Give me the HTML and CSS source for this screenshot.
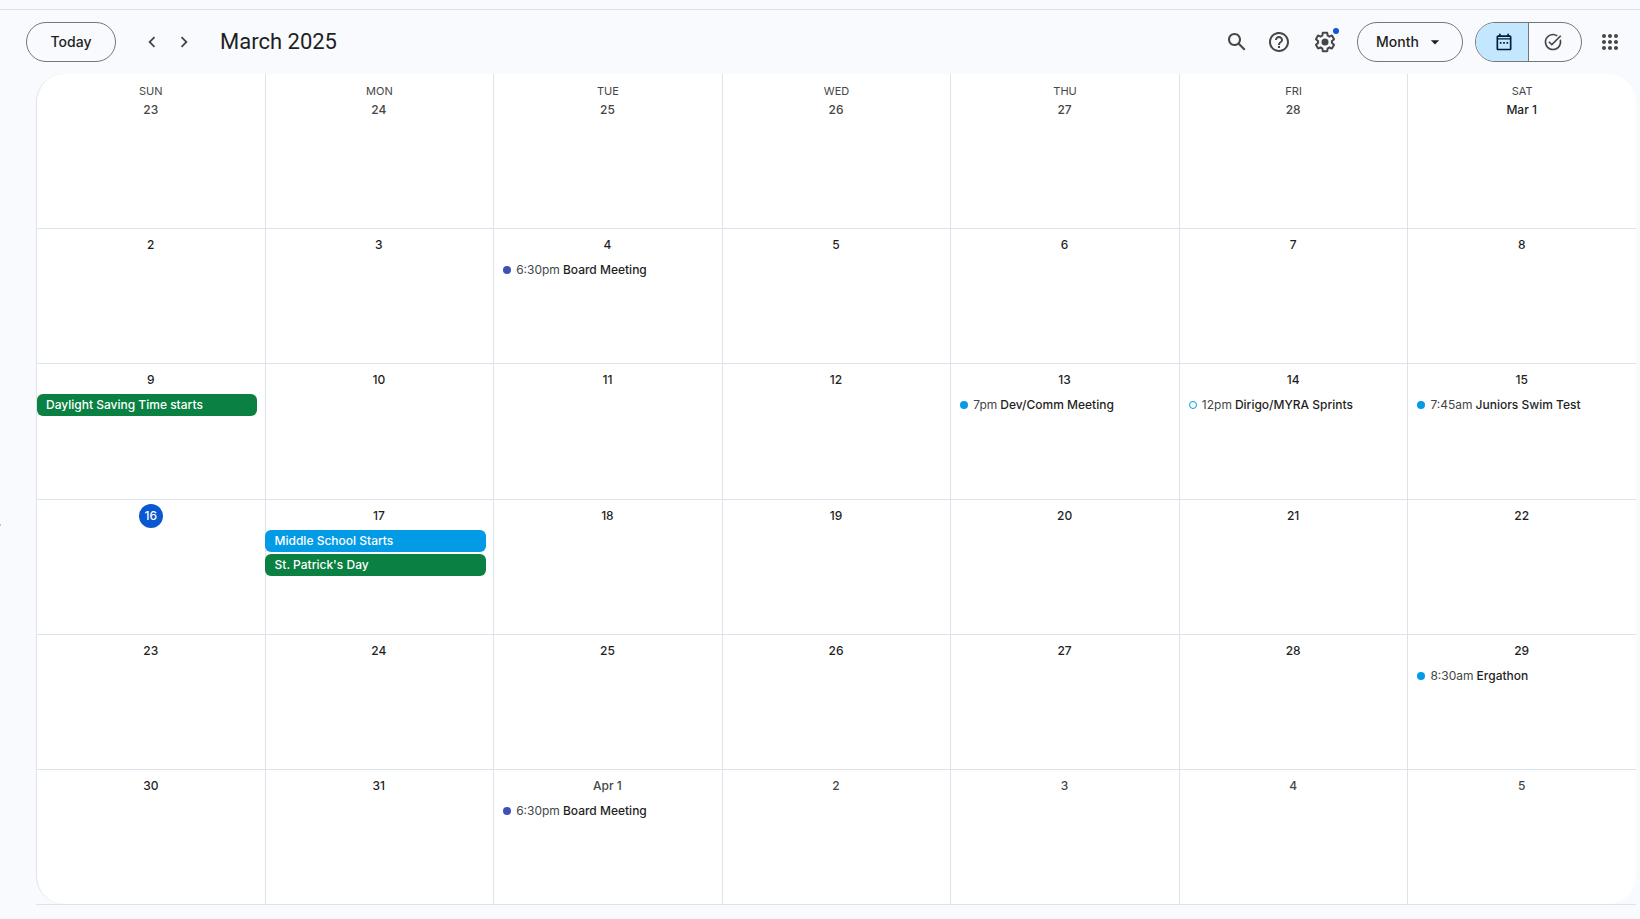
FILE: index.html
```html
<!DOCTYPE html>
<html lang="en">
<head>
<meta charset="utf-8">
<title>March 2025</title>
<link rel="stylesheet" href="styles.css">
</head>
<body>
<header class="toolbar">
  <button class="pill today-button" type="button">Today</button>
  <nav class="pager" aria-label="Change month">
    <button class="icon-button" type="button" aria-label="Previous month"><svg viewBox="0 0 24 24" width="22" height="22"><path d="M15.41 7.41 14 6l-6 6 6 6 1.41-1.41L10.83 12z"/></svg></button>
    <button class="icon-button" type="button" aria-label="Next month"><svg viewBox="0 0 24 24" width="22" height="22"><path d="M10 6 8.59 7.41 13.17 12l-4.58 4.59L10 18l6-6z"/></svg></button>
  </nav>
  <h1 class="title">March 2025</h1>
  <div class="tools">
    <button class="icon-button" type="button" aria-label="Search"><svg viewBox="0 0 24 24" width="24" height="24"><path d="M20.49 19l-5.73-5.73C15.53 12.2 16 10.91 16 9.5 16 5.91 13.09 3 9.5 3S3 5.91 3 9.5 5.91 16 9.5 16c1.41 0 2.7-.47 3.77-1.24L19 20.49 20.49 19zM5 9.5C5 7.01 7.01 5 9.5 5S14 7.01 14 9.5 11.99 14 9.5 14 5 11.99 5 9.5z"/></svg></button>
    <button class="icon-button help" type="button" aria-label="Support"><svg viewBox="0 0 24 24" width="24" height="24"><path d="M11 18h2v-2h-2v2zm1-16C6.48 2 2 6.48 2 12s4.48 10 10 10 10-4.480 10-10S17.52 2 12 2zm0 18c-4.41 0-8-3.590-8-8s3.590-8 8-8 8 3.590 8 8-3.590 8-8 8zm0-14c-2.210 0-4 1.790-4 4h2c0-1.100.9-2 2-2s2 .9 2 2c0 2-3 1.750-3 5h2c0-2.250 3-2.500 3-5 0-2.210-1.790-4-4-4z"/></svg></button>
    <button class="icon-button settings" type="button" aria-label="Settings"><svg viewBox="0 0 24 24" width="24" height="24"><path d="M13.850 22.250h-3.700c-.740 0-1.360-.540-1.450-1.270l-.270-1.890c-.270-.140-.530-.290-.790-.460l-1.800.720c-.7.260-1.470-.030-1.810-.650L2.200 15.530c-.350-.660-.2-1.440.360-1.880l1.530-1.190c-.010-.150-.020-.3-.020-.460 0-.150.010-.310.020-.460l-1.520-1.190c-.590-.450-.740-1.260-.370-1.880l1.850-3.190c.340-.620 1.110-.9 1.790-.630l1.810.730c.260-.170.520-.320.780-.460l.270-1.910c.090-.7.710-1.250 1.440-1.250h3.700c.740 0 1.360.540 1.450 1.270l.270 1.890c.270.140.530.290.790.460l1.800-.720c.710-.260 1.480.030 1.820.650l1.840 3.180c.360.660.2 1.440-.360 1.880l-1.520 1.190c.010.150.020.300.020.460s-.010.310-.020.460l1.520 1.190c.560.450.720 1.230.370 1.860l-1.860 3.220c-.340.620-1.110.9-1.800.630l-1.800-.720c-.260.170-.520.320-.780.460l-.270 1.910c-.1.680-.720 1.220-1.460 1.220zm-3.230-2h2.760l.370-2.550.530-.220c.440-.180.880-.440 1.340-.780l.450-.340 2.380.960 1.380-2.400-2.030-1.580.070-.560c.030-.260.060-.510.060-.780s-.030-.530-.060-.780l-.070-.560 2.030-1.580-1.390-2.400-2.390.960-.450-.350c-.420-.320-.870-.580-1.330-.770l-.520-.220-.370-2.550h-2.760l-.370 2.550-.530.210c-.440.190-.880.440-1.340.790l-.450.330-2.380-.950-1.390 2.390 2.030 1.580-.070.560a7 7 0 0 0 0 1.560l.070.560-2.030 1.580 1.380 2.400 2.390-.960.450.350c.430.330.860.580 1.330.770l.530.220z"/><circle cx="12" cy="12" r="3.500"/></svg><span class="notice"></span></button>
    <button class="pill view-button" type="button">Month<svg viewBox="0 0 24 24" width="20" height="20"><path d="M7 10l5 5 5-5z"/></svg></button>
    <div class="switch" role="group" aria-label="Calendar or tasks">
      <button class="half selected" type="button" aria-label="Calendar"><svg viewBox="0 0 24 24" width="20" height="20"><path d="M19 4h-1V2h-2v2H8V2H6v2H5c-1.110 0-2 .9-2 2v14c0 1.100.890 2 2 2h14c1.100 0 2-.9 2-2V6c0-1.100-.9-2-2-2zm0 16H5V9h14v11zM5 7.500V6h14v1.500zM9 14H7v-2h2v2zm4 0h-2v-2h2v2zm4 0h-2v-2h2v2z"/></svg></button>
      <button class="half" type="button" aria-label="Tasks"><svg viewBox="0 0 24 24" width="20" height="20"><path d="M22 5.180 10.590 16.600l-4.240-4.240 1.410-1.410 2.830 2.830 10-10L22 5.180zM12 20c-4.410 0-8-3.590-8-8s3.590-8 8-8c1.570 0 3.040.460 4.280 1.250l1.450-1.450A10.020 10.020 0 0 0 12 2C6.480 2 2 6.480 2 12s4.480 10 10 10 10-4.480 10-10c0-1.190-.220-2.330-.6-3.390L19.740 10.270c.170.550.260 1.130.260 1.730 0 4.410-3.590 8-8 8z"/></svg></button>
    </div>
    <button class="icon-button apps" type="button" aria-label="Apps"><svg viewBox="0 0 24 24" width="24" height="24"><path d="M6 8c1.100 0 2-.9 2-2s-.9-2-2-2-2 .9-2 2 .9 2 2 2zm6 12c1.100 0 2-.9 2-2s-.9-2-2-2-2 .9-2 2 .9 2 2 2zm-6 0c1.100 0 2-.9 2-2s-.9-2-2-2-2 .9-2 2 .9 2 2 2zm0-6c1.100 0 2-.9 2-2s-.9-2-2-2-2 .9-2 2 .9 2 2 2zm6 0c1.100 0 2-.9 2-2s-.9-2-2-2-2 .9-2 2 .9 2 2 2zm4-8c0 1.100.9 2 2 2s2-.9 2-2-.9-2-2-2-2 .9-2 2zm-4 2c1.100 0 2-.9 2-2s-.9-2-2-2-2 .9-2 2 .9 2 2 2zm6 6c1.100 0 2-.9 2-2s-.9-2-2-2-2 .9-2 2 .9 2 2 2zm0 6c1.100 0 2-.9 2-2s-.9-2-2-2-2 .9-2 2 .9 2 2 2z"/></svg></button>
  </div>
</header>
<main class="month">
  <span class="edge-mark"></span>
  <table class="calendar">
    <thead>
      <tr><th scope="col">SUN</th><th scope="col">MON</th><th scope="col">TUE</th><th scope="col">WED</th><th scope="col">THU</th><th scope="col">FRI</th><th scope="col">SAT</th></tr>
    </thead>
    <tbody>
      <tr>
        <td><span class="day other">23</span></td><td><span class="day other">24</span></td><td><span class="day other">25</span></td><td><span class="day other">26</span></td><td><span class="day other">27</span></td><td><span class="day other">28</span></td><td><span class="day">Mar 1</span></td>
      </tr>
      <tr>
        <td><span class="day">2</span></td><td><span class="day">3</span></td>
        <td><span class="day">4</span><div class="event"><span class="dot indigo"></span><span class="time">6:30pm</span><span>Board Meeting</span></div></td>
        <td><span class="day">5</span></td><td><span class="day">6</span></td><td><span class="day">7</span></td><td><span class="day">8</span></td>
      </tr>
      <tr>
        <td><span class="day">9</span><div class="chip green">Daylight Saving Time starts</div></td>
        <td><span class="day">10</span></td><td><span class="day">11</span></td><td><span class="day">12</span></td>
        <td><span class="day">13</span><div class="event"><span class="dot"></span><span class="time">7pm</span><span>Dev/Comm Meeting</span></div></td>
        <td><span class="day">14</span><div class="event"><span class="dot hollow"></span><span class="time">12pm</span><span>Dirigo/MYRA Sprints</span></div></td>
        <td><span class="day">15</span><div class="event"><span class="dot"></span><span class="time">7:45am</span><span>Juniors Swim Test</span></div></td>
      </tr>
      <tr>
        <td><span class="day current">16</span></td>
        <td><span class="day">17</span><div class="chip blue">Middle School Starts</div><div class="chip green">St. Patrick's Day</div></td>
        <td><span class="day">18</span></td><td><span class="day">19</span></td><td><span class="day">20</span></td><td><span class="day">21</span></td><td><span class="day">22</span></td>
      </tr>
      <tr>
        <td><span class="day">23</span></td><td><span class="day">24</span></td><td><span class="day">25</span></td><td><span class="day">26</span></td><td><span class="day">27</span></td><td><span class="day">28</span></td>
        <td><span class="day">29</span><div class="event"><span class="dot"></span><span class="time">8:30am</span><span>Ergathon</span></div></td>
      </tr>
      <tr>
        <td><span class="day">30</span></td><td><span class="day">31</span></td>
        <td><span class="day other">Apr 1</span><div class="event"><span class="dot indigo"></span><span class="time">6:30pm</span><span>Board Meeting</span></div></td>
        <td><span class="day other">2</span></td><td><span class="day other">3</span></td><td><span class="day other">4</span></td><td><span class="day other">5</span></td>
      </tr>
    </tbody>
  </table>
</main>
</body>
</html>
```
FILE: styles.css
```css
* { box-sizing: border-box; }

body {
  margin: 0;
  padding: 9px 0 14px;
  min-height: 100vh;
  display: flex;
  flex-direction: column;
  background: #f8fafd;
  color: #1f1f1f;
  font-family: Inter, Roboto, sans-serif;
  font-size: 12px;
}

button {
  font: inherit;
  color: inherit;
  background: none;
  border: 0;
  padding: 0;
  cursor: pointer;
}

svg { display: block; fill: currentColor; }

/* Toolbar */
.toolbar {
  display: flex;
  align-items: center;
  height: 65px;
  padding: 0 14px 0 26px;
  border-top: 1px solid #dde3ea;
}

.pill {
  height: 40px;
  padding-bottom: 1px;
  border: 1px solid #747775;
  border-radius: 20px;
  font-size: 14px;
  font-weight: 500;
}

.today-button { width: 90px; }

.pager { display: flex; margin-left: 20px; }

.icon-button {
  position: relative;
  display: grid;
  place-items: center;
  width: 32px;
  height: 40px;
  color: #444746;
}

.title {
  margin: 0 0 0 20px;
  font-family: Roboto, sans-serif;
  font-size: 22px;
  line-height: 28px;
  font-weight: 400;
}

.tools { display: flex; align-items: center; margin-left: auto; }

.help { margin-left: 10px; }
.settings { margin-left: 14px; }
.apps { margin-left: 12px; }

.notice {
  position: absolute;
  top: 6px;
  right: 2px;
  width: 6px;
  height: 6px;
  border-radius: 50%;
  background: #0b57d0;
}

.view-button {
  display: flex;
  align-items: center;
  justify-content: space-between;
  width: 106px;
  margin-left: 16px;
  padding: 0 17px 1px 18px;
}

.switch {
  display: flex;
  width: 107px;
  height: 40px;
  margin-left: 12px;
  border: 1px solid #747775;
  border-radius: 20px;
  overflow: hidden;
}

.half { flex: 1; display: grid; place-items: center; padding-right: 4px; color: #444746; }
.half.selected { padding: 0 0 0 4px; background: #c2e7ff; color: #001d35; border-right: 1px solid #747775; }

/* Month grid */
.month {
  position: relative;
  flex: 1;
  display: flex;
  margin: 0 4px 0 36px;
  border-bottom: 1px solid #dde3ea;
}

.edge-mark {
  position: absolute;
  left: -36px;
  top: 450px;
  width: 1px;
  height: 2px;
  background: #8fd3f4;
}

.calendar {
  flex: 1;
  display: flex;
  flex-direction: column;
  background: #fff;
  border-left: 1px solid #dde3ea;
  border-radius: 28px;
  overflow: hidden;
}

thead { display: block; height: 19px; }
tbody { flex: 1; display: grid; grid-template-rows: repeat(6, 1fr); }
tr {
  display: grid;
  grid-template-columns: repeat(7, minmax(0, 1fr));
  margin-left: -1px;
}
tbody tr { border-top: 1px solid #dde3ea; }
tbody tr:first-child { border-color: transparent; }

th, td { display: block; padding: 0; }
th {
  padding: 10px 0 0 1px;
  font-size: 11px;
  line-height: 14px;
  font-weight: 400;
  color: #444746;
  text-align: center;
}
td { padding-top: 4px; }
td:first-child { padding-left: 1px; }
th + th, td + td { box-shadow: inset 1px 0 #dde3ea; }

.day {
  display: block;
  width: max-content;
  min-width: 24px;
  margin: 0 auto 2px;
  line-height: 24px;
  font-weight: 500;
  text-align: center;
}
.day.other { color: #444746; }
.day.current { border-radius: 50%; background: #0b57d0; color: #fff; }

.chip {
  height: 22px;
  margin: 0 8px 2px 0;
  padding: 0 9px;
  border-radius: 6px;
  line-height: 22px;
  font-weight: 500;
  color: #fff;
  white-space: nowrap;
}
td + td .chip { margin-right: 7px; padding-left: 10px; }
.green { background: #0b8043; }
.blue { background: #039be5; }

.event {
  display: flex;
  align-items: center;
  height: 22px;
  padding-left: 10px;
  line-height: 22px;
  font-weight: 500;
  white-space: nowrap;
}
.dot {
  width: 8px;
  height: 8px;
  margin-right: 5px;
  border-radius: 50%;
  background: #039be5;
}
.dot.indigo { background: #3f51b5; }
.dot.hollow { background: none; border: 1px solid #039be5; }
.time { margin-right: 3px; font-weight: 400; color: #444746; }
```
